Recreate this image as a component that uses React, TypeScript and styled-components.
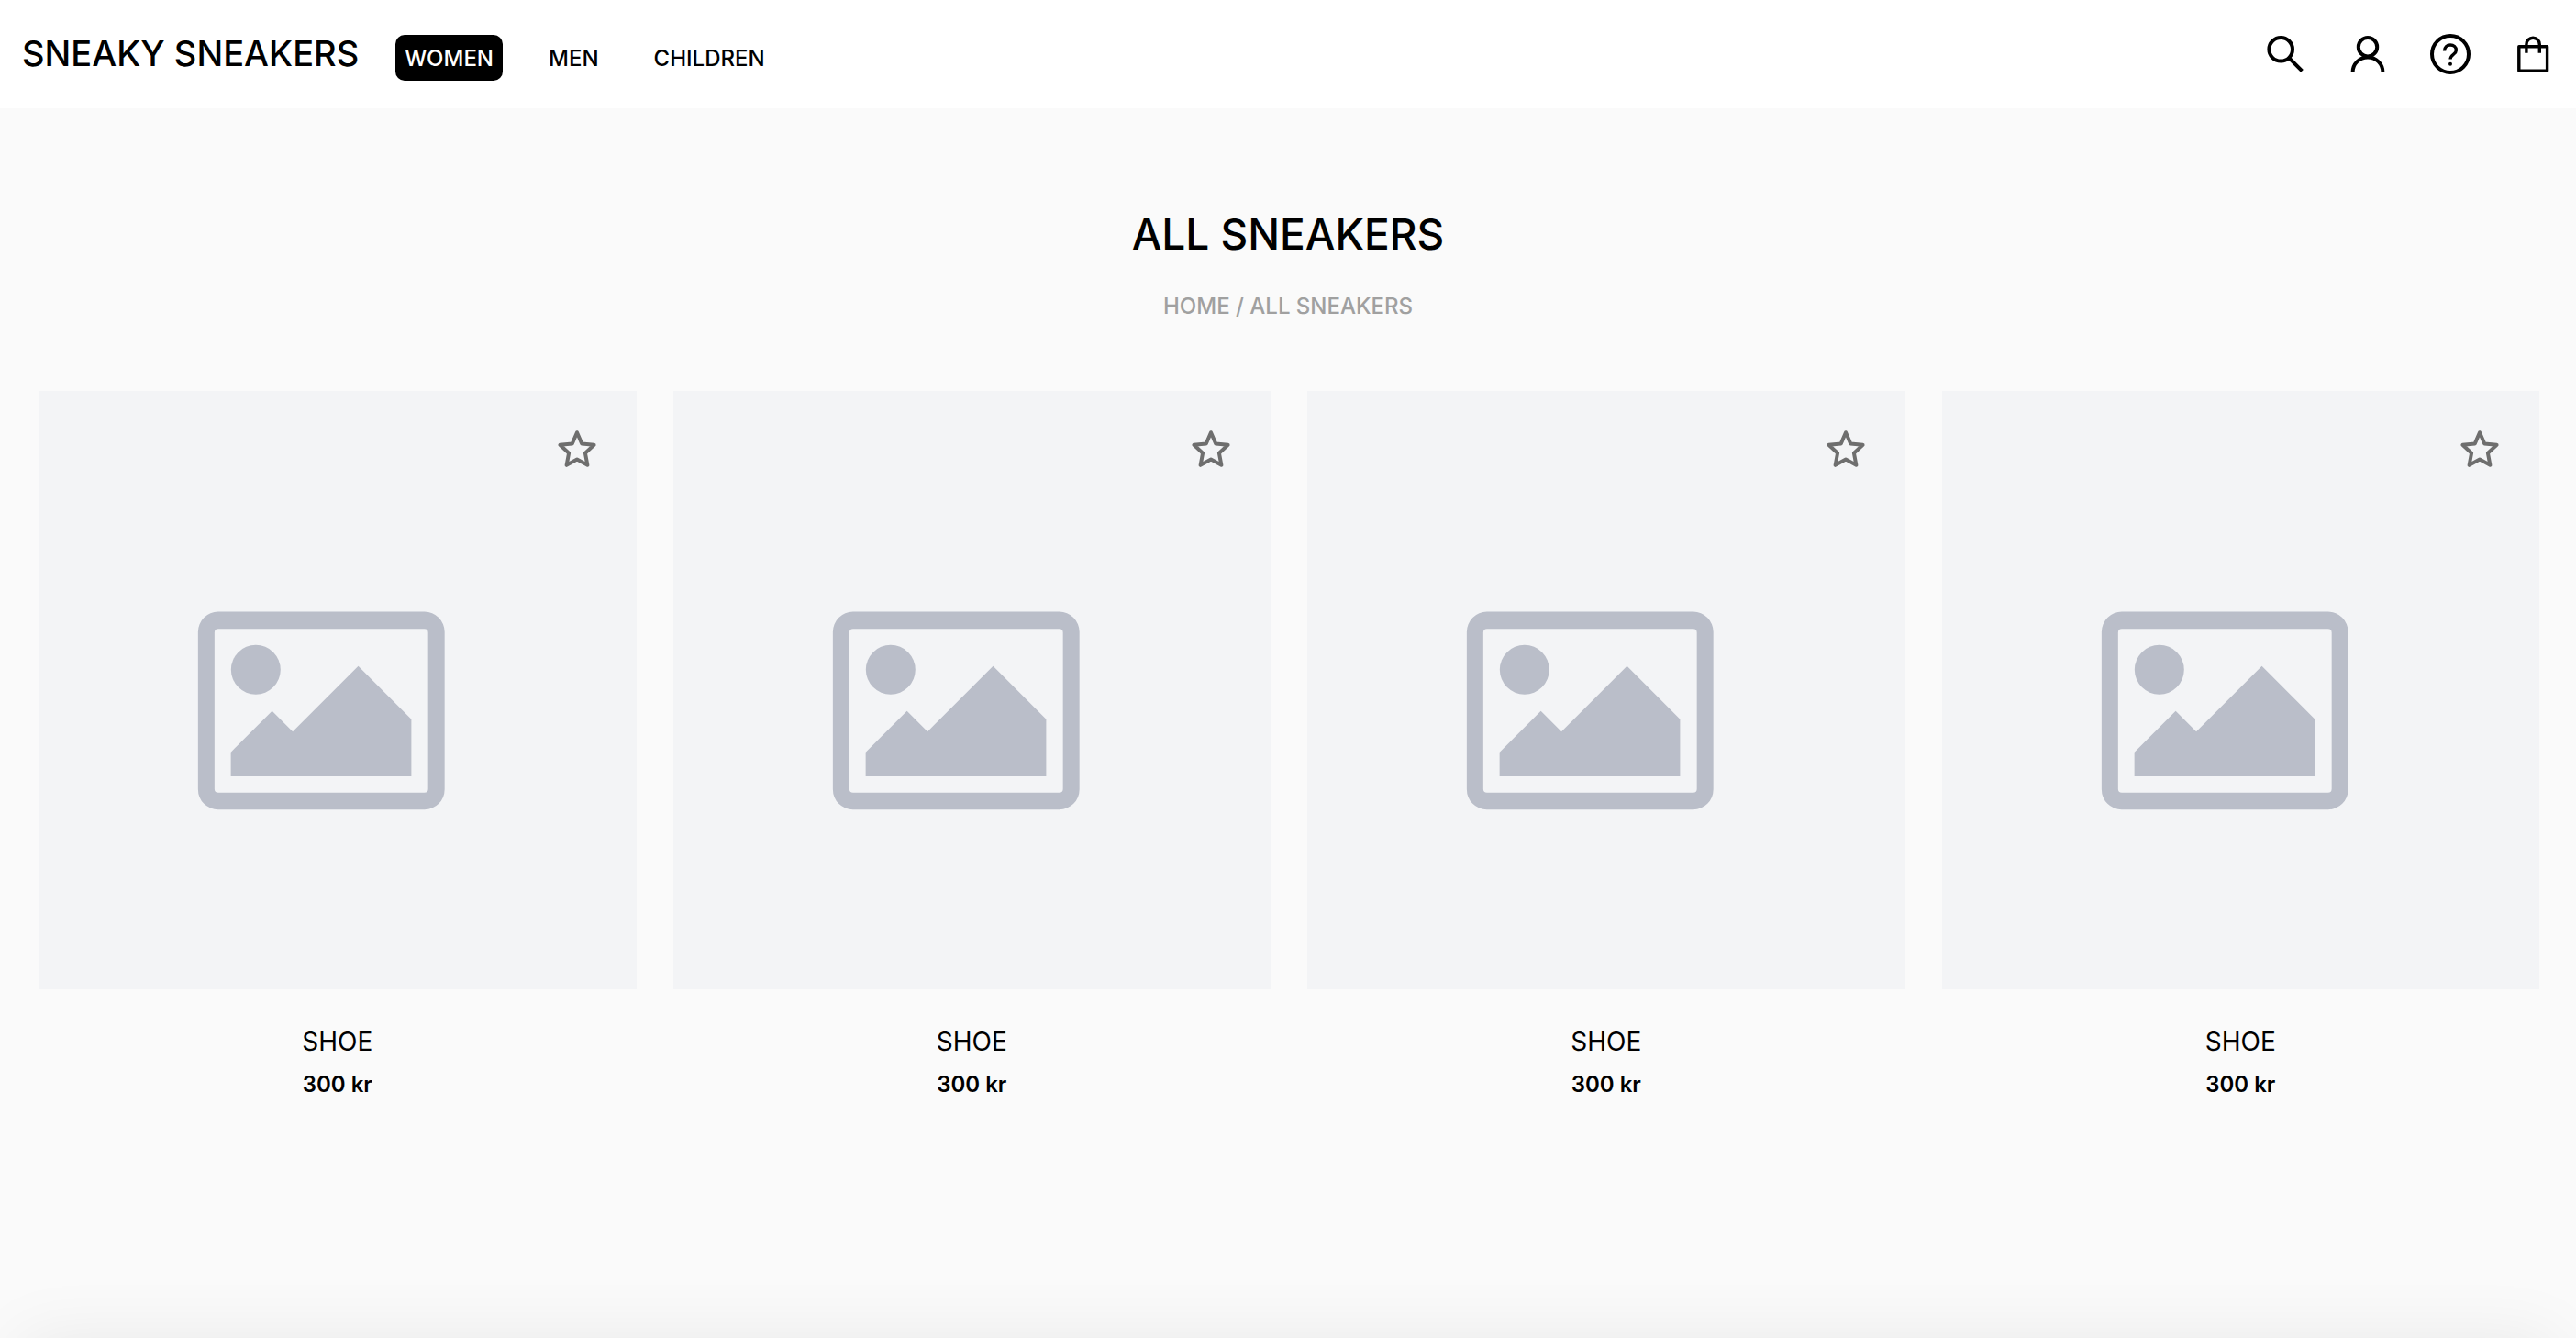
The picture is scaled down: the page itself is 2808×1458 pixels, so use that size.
import React from "react";
import styled, { createGlobalStyle } from "styled-components";

const GlobalStyle = createGlobalStyle`
  *, *::before, *::after { box-sizing: border-box; }
  body {
    margin: 0;
    background: #fafafa;
    color: #000;
    font-family: Inter, "Liberation Sans", sans-serif;
    -webkit-font-smoothing: antialiased;
  }
`;

const Page = styled.div`
  min-height: 100vh;
`;

const Header = styled.header`
  display: flex;
  align-items: flex-start;
  justify-content: space-between;
  padding: 34px 22px 30px 24px;
  background: #fff;
`;

const HeaderStart = styled.div`
  display: flex;
  align-items: flex-start;
  gap: 40px;
`;

const Logo = styled.a`
  color: inherit;
  font-size: 38px;
  font-weight: 500;
  line-height: 48px;
  text-decoration: none;
`;

const Nav = styled.nav`
  display: flex;
  gap: 40px;
  padding-top: 4px;
`;

const NavLink = styled.a<{ $active?: boolean }>`
  padding: 11px 10px 9px;
  border-radius: 10px;
  background: ${(p) => (p.$active ? "#000" : "transparent")};
  color: ${(p) => (p.$active ? "#fff" : "#000")};
  font-size: 24px;
  font-weight: 500;
  line-height: 30px;
  text-decoration: none;
`;

const Actions = styled.div`
  display: flex;
  gap: 40px;
`;

const IconButton = styled.button`
  display: block;
  width: 50px;
  height: 50px;
  padding: 0;
  border: 0;
  background: none;
  color: #000;
  cursor: pointer;
`;

const Icon = styled.svg`
  display: block;
  width: 50px;
  height: 50px;
  fill: none;
  stroke: currentColor;
  stroke-width: 4;
`;

const Intro = styled.div`
  display: flex;
  flex-direction: column;
  align-items: center;
  gap: 34px;
  padding: 108px 42px 76px;
`;

const Title = styled.h1`
  margin: 0;
  font-size: 46px;
  font-weight: 500;
  line-height: 58px;
`;

const Breadcrumb = styled.nav`
  color: #a0a0a0;
  font-size: 24px;
  font-weight: 500;
  line-height: 32px;

  a {
    color: inherit;
    text-decoration: none;
  }
`;

const Grid = styled.ul`
  display: grid;
  grid-template-columns: repeat(4, 1fr);
  gap: 40px;
  margin: 0;
  padding: 0 40px 0 42px;
  list-style: none;
`;

const Card = styled.li`
  position: relative;
  text-align: center;
`;

const Picture = styled.svg`
  display: block;
  width: 100%;
  aspect-ratio: 1;
  background: #f3f4f6;
  fill: #babec9;
`;

const FavouriteButton = styled(IconButton)`
  position: absolute;
  top: 38px;
  right: 40px;
  color: #6e6e6e;
`;

const Name = styled.h2`
  margin: 40px 0 14px;
  font-size: 28px;
  font-weight: 400;
  line-height: 34px;
`;

const Price = styled.p`
  margin: 0;
  font-size: 24px;
  font-weight: 600;
  line-height: 32px;
`;

const Sheet = styled.div`
  position: fixed;
  top: 100%;
  left: 0;
  right: 0;
  height: 400px;
  background: #fff;
  box-shadow: 0 -20px 72px -24px rgba(0, 0, 0, 0.08);
`;

const categories = ["WOMEN", "MEN", "CHILDREN"];

const products = [1, 2, 3, 4].map((id) => ({ id, name: "SHOE", price: "300 kr" }));

const SearchIcon = () => (
  <Icon viewBox="0 0 50 50" aria-hidden="true">
    <circle cx="20.2" cy="19.8" r="12.8" />
    <path d="M29.2 29.2L43.4 43.4" />
  </Icon>
);

const UserIcon = () => (
  <Icon viewBox="0 0 50 50" aria-hidden="true">
    <circle cx="25" cy="17.2" r="10.2" />
    <path d="M8.6 44.8A16.4 16.4 0 0 1 41.4 44.8" />
  </Icon>
);

const HelpIcon = () => (
  <Icon viewBox="0 0 50 50" aria-hidden="true">
    <circle cx="25" cy="25" r="20" />
    <path
      strokeWidth="3.4"
      d="M18.6 21.4C18.6 17.4 21.4 15 25 15C28.6 15 31.4 17.4 31.4 20.8C31.4 25.2 25.1 25.4 25.1 30.6"
    />
    <circle cx="25" cy="35.7" r="2" fill="currentColor" stroke="none" />
  </Icon>
);

const BagIcon = () => (
  <Icon viewBox="0 0 50 50" aria-hidden="true">
    <path strokeWidth="3.4" strokeLinejoin="round" d="M9.8 16.8H40.6V43.2H9.8Z" />
    <path strokeWidth="3.4" d="M17.9 23.7V14.4A7.2 7.2 0 0 1 32.3 14.4V23.7" />
  </Icon>
);

const StarIcon = () => (
  <Icon viewBox="0 0 50 50" aria-hidden="true">
    <path
      strokeWidth="4"
      strokeLinejoin="round"
      d="M25 7.2L30.2 19.4L43.6 20.8L33.9 29.7L36.4 42.8L25 36.6L13.6 42.8L16.1 29.7L6.4 20.8L19.8 19.4Z"
    />
  </Icon>
);

const Placeholder = ({ label }: { label: string }) => (
  <Picture viewBox="0 0 652 652" role="img" aria-label={label}>
    <path
      fillRule="evenodd"
      d="M196 240.8H421A22 22 0 0 1 443 262.8V434.6A22 22 0 0 1 421 456.6H196A22 22 0 0 1 174 434.6V262.8A22 22 0 0 1 196 240.8ZM196 259.4A4 4 0 0 0 192 263.4V434A4 4 0 0 0 196 438H421A4 4 0 0 0 425 434V263.4A4 4 0 0 0 421 259.4Z"
    />
    <circle cx="237" cy="304" r="27" />
    <path d="M209.8 394L254.8 349L277.3 371.5L348.8 300L406.7 358V420.4H209.8Z" />
  </Picture>
);

export default function App() {
  return (
    <Page>
      <GlobalStyle />
      <Header>
        <HeaderStart>
          <Logo href="#">SNEAKY SNEAKERS</Logo>
          <Nav aria-label="Categories">
            {categories.map((category, index) => (
              <NavLink key={category} href="#" $active={index === 0}>
                {category}
              </NavLink>
            ))}
          </Nav>
        </HeaderStart>
        <Actions>
          <IconButton type="button" aria-label="Search"><SearchIcon /></IconButton>
          <IconButton type="button" aria-label="Account"><UserIcon /></IconButton>
          <IconButton type="button" aria-label="Help"><HelpIcon /></IconButton>
          <IconButton type="button" aria-label="Bag"><BagIcon /></IconButton>
        </Actions>
      </Header>
      <main>
        <Intro>
          <Title>ALL SNEAKERS</Title>
          <Breadcrumb aria-label="Breadcrumb">
            <a href="#">HOME</a> / <a href="#">ALL SNEAKERS</a>
          </Breadcrumb>
        </Intro>
        <Grid>
          {products.map((product) => (
            <Card key={product.id}>
              <Placeholder label={product.name} />
              <FavouriteButton type="button" aria-label="Add to favourites">
                <StarIcon />
              </FavouriteButton>
              <Name>{product.name}</Name>
              <Price>{product.price}</Price>
            </Card>
          ))}
        </Grid>
      </main>
      <Sheet />
    </Page>
  );
}
